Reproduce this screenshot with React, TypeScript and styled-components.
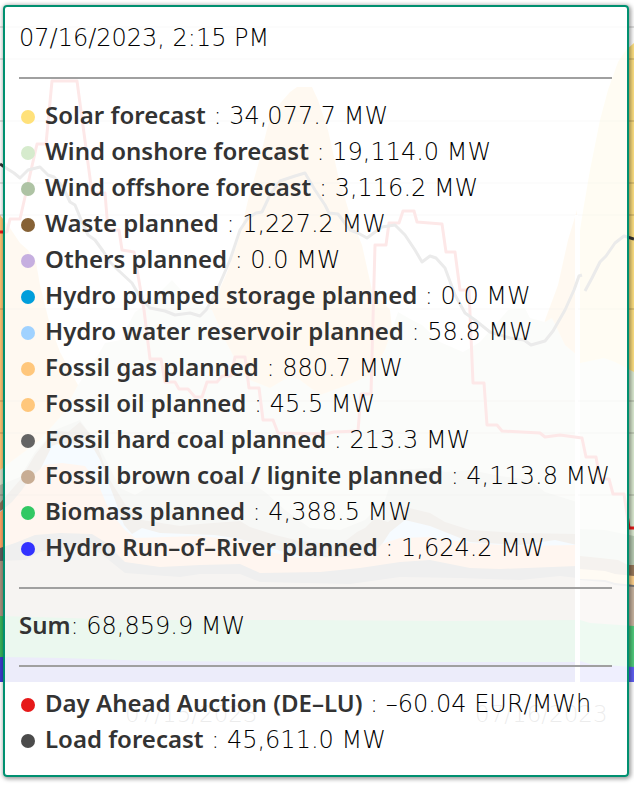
import React from 'react';
import styled, { createGlobalStyle } from 'styled-components';

const GlobalStyle = createGlobalStyle`
  *, *::before, *::after { box-sizing: border-box; }
  body { margin: 0; background: #fff; }
`;

const textFont = `'DejaVu Sans', 'Lucida Sans', sans-serif`;
const labelFont = `'Noto Sans', 'Open Sans', sans-serif`;

const Page = styled.main`
  position: relative;
  display: flow-root;
  overflow: hidden;
`;

const Chart = styled.svg`
  position: absolute;
  inset: 0;
  width: 100%;
  height: 100%;
`;

const AxisText = styled.text`
  font: 200 23px ${textFont};
  fill: #444;
`;

const Tooltip = styled.section`
  position: relative;
  margin: 5px 5px 8px 3px;
  padding: 13px 15px 17px 14px;
  border: 2px solid #009070;
  border-radius: 4px;
  background: rgba(255, 255, 255, 0.9);
  box-shadow: 1px 1px 4px 1px rgba(0, 0, 0, 0.4);
  color: #000;
  font-family: ${textFont};
  font-size: 24px;
  font-weight: 200;
  line-height: 36px;
  white-space: nowrap;
`;

const Divider = styled.hr`
  height: 2px;
  margin: 21px 0 19px;
  border: 0;
  background: #a0a0a0;
`;

const Series = styled.ul`
  margin: 0;
  padding: 0;
  list-style: none;
`;

const Item = styled.li`
  display: flex;
  align-items: center;
  height: 36px;
`;

const Dot = styled.span<{ $color: string }>`
  flex: none;
  width: 14px;
  height: 14px;
  margin: 2px 10px 0 2px;
  border-radius: 50%;
  background: ${(p) => p.$color};
`;

const Label = styled.strong`
  color: #333;
  font-family: ${labelFont};
  font-weight: 600;
  line-height: 1;
`;

const Value = styled.span`
  white-space: pre;
`;

type Entry = { name: string; value: string; color: string };

const production: Entry[] = [
  { name: 'Solar forecast', value: '34,077.7 MW', color: '#ffe17a' },
  { name: 'Wind onshore forecast', value: '19,114.0 MW', color: '#d6ebcd' },
  { name: 'Wind offshore forecast', value: '3,116.2 MW', color: '#aec3a4' },
  { name: 'Waste planned', value: '1,227.2 MW', color: '#866236' },
  { name: 'Others planned', value: '0.0 MW', color: '#c6afe0' },
  { name: 'Hydro pumped storage planned', value: '0.0 MW', color: '#009edb' },
  { name: 'Hydro water reservoir planned', value: '58.8 MW', color: '#a0d2ff' },
  { name: 'Fossil gas planned', value: '880.7 MW', color: '#ffc77c' },
  { name: 'Fossil oil planned', value: '45.5 MW', color: '#ffc77c' },
  { name: 'Fossil hard coal planned', value: '213.3 MW', color: '#646464' },
  { name: 'Fossil brown coal / lignite planned', value: '4,113.8 MW', color: '#c8ad94' },
  { name: 'Biomass planned', value: '4,388.5 MW', color: '#32c864' },
  { name: 'Hydro Run–of–River planned', value: '1,624.2 MW', color: '#3232ff' },
];

const market: Entry[] = [
  { name: 'Day Ahead Auction (DE–LU)', value: '–60.04 EUR/MWh', color: '#e61919' },
  { name: 'Load forecast', value: '45,611.0 MW', color: '#4b4b4b' },
];

const BASE = 682;
const SPLIT = 577;

/* Top edges of the stacked areas, from the outermost layer inwards. */
const pastLayers = [
  { color: '#ffc473', top: '0,215 10,228 20,243 28,250 36,262 40,285 50,325 60,352 78,385 95,400 150,400 200,320 215,300 228,270 240,235 248,200 258,165 268,125 276,108 290,92 297,87 312,87 318,100 328,130 338,175 350,215 362,245 372,290 390,310 400,400 530,400 545,320 558,285 568,240 577,210' },
  { color: '#d7dec8', top: '0,470 40,440 62,415 78,385 95,360 105,343 120,340 128,325 135,312 150,302 172,280 190,300 212,310 225,340 245,378 270,388 290,376 300,380 320,395 350,384 370,375 385,350 398,312 412,320 422,325 440,342 463,352 480,342 495,325 508,310 525,308 530,318 545,322 552,318 565,345 577,355' },
  { color: '#adb5a3', top: '0,485 20,477 35,452 55,430 80,420 100,448 120,488 135,495 155,483 190,480 250,482 265,492 285,510 310,528 340,530 365,520 385,500 395,470 430,468 445,472 470,470 500,476 530,480 545,492 577,502' },
  { color: '#866e55', top: '0,503 20,480 35,455 55,430 68,432 80,422 95,440 110,480 130,512 142,520 180,526 200,524 240,521 250,527 275,535 300,541 340,545 357,532 365,528 375,518 388,522 398,514 405,507 430,513 445,522 470,530 520,533 577,534' },
  { color: '#a0d4fa', top: '0,511 20,500 40,470 52,446 60,443 75,444 88,439 100,460 115,500 124,525 132,534 142,528 160,533 215,535 240,539 270,548 300,556 340,560 375,555 390,532 405,520 430,526 445,532 470,542 520,545 555,540 577,545' },
  { color: '#ffa465', top: '0,512 12,502 22,490 30,478 45,465 62,463 85,466 98,484 110,512 125,530 135,538 200,536 240,540 270,552 300,558 370,556 382,544 400,538 430,537 470,543 520,546 577,545' },
  { color: '#5c5c5c', top: '0,548 15,543 35,535 60,533 92,534 105,542 125,562 160,567 200,565 240,564 260,573 320,572 360,568 400,562 430,560 470,568 500,569 577,566' },
  { color: '#a6917d', top: '0,561 25,560 40,552 60,548 92,548 105,557 125,573 180,577 200,574 240,574 260,582 350,584 400,577 460,578 520,580 560,576 577,578' },
  { color: '#37b35b', top: '0,616 70,618 120,620 300,620 450,621 577,620' },
  { color: '#3c3ccd', top: '0,657 60,658 150,661 300,662 577,662' },
];

const futureLayers = [
  { color: '#ffe182', top: '580,230 584,205 590,170 600,120 608,90 618,62 626,50 634,43' },
  { color: '#dcebd2', top: '580,363 604,358 615,362 634,372' },
  { color: '#b9cdb4', top: '580,529 605,530 634,536' },
  { color: '#96785a', top: '580,556 600,558 618,560 628,565 634,565' },
  { color: '#ffd28c', top: '580,569 605,571 615,574 634,576' },
  { color: '#787878', top: '580,579 605,580 615,583 634,585' },
  { color: '#c8b4a0', top: '580,580 605,582 615,585 634,587' },
  { color: '#50cd7d', top: '580,620 590,623 634,626' },
  { color: '#6060f5', top: '580,661 590,664 634,667' },
];

const price =
  '0,232 7,232 10,219 20,219 37,144 46,144 52,81 77,81 92,193 105,193 108,230 119,230 122,250 134,252 144,310 150,359 161,359 165,382 175,382 179,389 188,389 195,397 202,397 207,382 217,382 222,376 231,376 235,357 245,357 249,388 259,388 263,420 273,420 278,433 325,434 334,432 358,431 361,394 371,394 375,245 386,245 389,223 399,223 403,211 414,211 417,222 442,224 446,252 455,252 460,290 469,290 473,383 484,383 487,425 497,425 502,431 540,433 545,437 560,435 582,438 586,457 596,457 600,479 609,479 613,494 624,494 629,528 634,528';

const loadPast =
  '0,164 6,168 14,173 20,178 28,170 40,167 48,175 54,177 63,187 70,202 75,205 82,222 88,235 95,240 103,251 110,262 118,270 132,283 140,297 150,308 165,311 175,315 190,313 200,316 206,310 215,295 230,260 240,230 248,218 256,213 262,212 270,195 280,181 295,176 305,173 315,190 325,205 329,213 338,214 350,230 358,233 367,238 382,227 395,225 405,235 415,250 422,262 430,256 436,258 445,268 455,295 465,313 475,320 490,332 510,338 524,340 531,345 545,341 553,331 565,310 574,290 579,276 582,275';
const loadFuture = '585,291 592,278 600,262 606,256 615,243 624,236 634,239';

const gridLines = [27, 59, 121, 183, 215, 309, 401, 433, 495];

function ForecastChart() {
  return (
    <Chart viewBox="0 0 634 785" preserveAspectRatio="none" aria-hidden="true">
      {pastLayers.map((l) => (
        <polygon key={l.color} fill={l.color} points={`0,${BASE} ${l.top} ${SPLIT},${BASE}`} />
      ))}
      {futureLayers.map((l) => (
        <polygon key={l.color} fill={l.color} points={`580,${BASE} ${l.top} 634,${BASE}`} />
      ))}
      {gridLines.map((y) => (
        <line key={y} x1="0" x2="634" y1={y} y2={y} stroke="#000" strokeOpacity="0.12" strokeWidth="2" />
      ))}
      <rect x="575" y="215" width="3" height="467" fill="#fff" />
      <g fill="none" strokeWidth="3" strokeLinejoin="round">
        <polyline stroke="#e61919" points={price} />
        <polyline stroke="#333" points={loadPast} />
        <polyline stroke="#333" points={loadFuture} />
      </g>
      <AxisText x="125" y="722">07/15/2023</AxisText>
      <AxisText x="475" y="722">07/16/2023</AxisText>
    </Chart>
  );
}

function SeriesList({ entries }: { entries: Entry[] }) {
  return (
    <Series>
      {entries.map((e) => (
        <Item key={e.name}>
          <Dot $color={e.color} />
          <span>
            <Label>{e.name}</Label>
            <Value> : {e.value}</Value>
          </span>
        </Item>
      ))}
    </Series>
  );
}

export default function App() {
  return (
    <>
      <GlobalStyle />
      <Page>
        <ForecastChart />
        <Tooltip role="tooltip">
          <header>07/16/2023, 2:15 PM</header>
          <Divider />
          <SeriesList entries={production} />
          <Divider />
          <div>
            <Label>Sum</Label>
            <Value>: 68,859.9 MW</Value>
          </div>
          <Divider />
          <SeriesList entries={market} />
        </Tooltip>
      </Page>
    </>
  );
}
